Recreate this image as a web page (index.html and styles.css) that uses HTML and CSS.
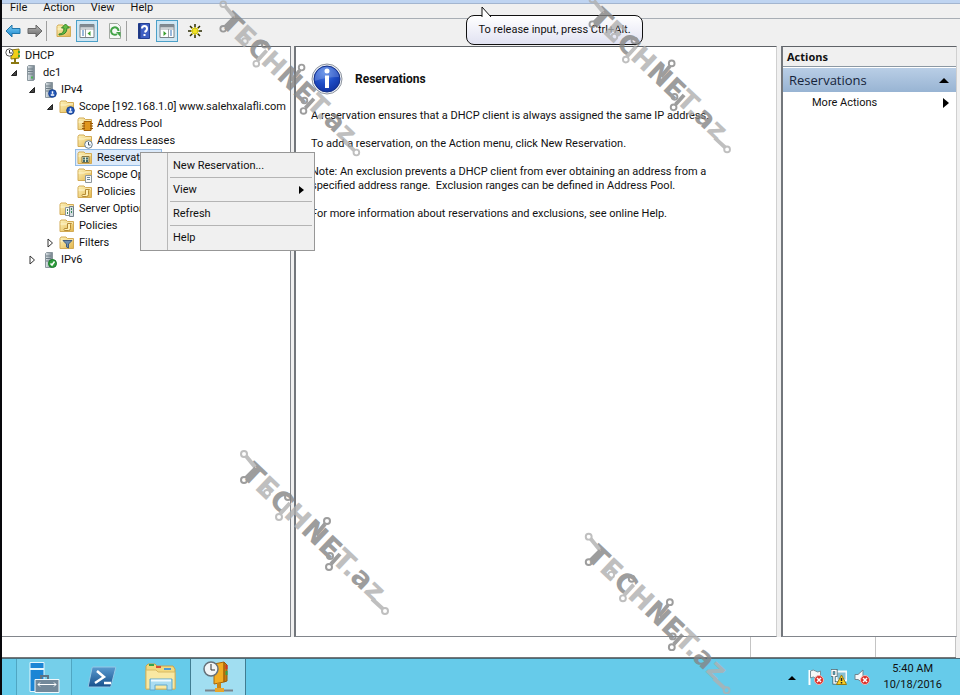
FILE: index.html
```html
<!DOCTYPE html>
<html lang="en">
<head>
<meta charset="utf-8">
<title>DHCP</title>
<link rel="stylesheet" href="styles.css">
</head>
<body>
<svg class="defs" width="0" height="0" aria-hidden="true">
  <defs>
    <linearGradient id="gFolder" x1="0" y1="0" x2="1" y2="1"><stop offset="0" stop-color="#fdf3bd"/><stop offset="1" stop-color="#e3b64c"/></linearGradient>
    <linearGradient id="gServer" x1="0" x2="1"><stop offset="0" stop-color="#dfe6ea"/><stop offset="1" stop-color="#72808a"/></linearGradient>
    <linearGradient id="gBlue" x1="0" y1="0" x2="0" y2="1"><stop offset="0" stop-color="#7fd0f5"/><stop offset="1" stop-color="#1583cc"/></linearGradient>
    <linearGradient id="gGrey" x1="0" y1="0" x2="0" y2="1"><stop offset="0" stop-color="#b5b5b5"/><stop offset="1" stop-color="#686868"/></linearGradient>
    <linearGradient id="gPs" x1="0" y1="0" x2="0" y2="1"><stop offset="0" stop-color="#5a9bd0"/><stop offset="1" stop-color="#17508c"/></linearGradient>
    <radialGradient id="gInfo" cx=".4" cy=".25" r=".9"><stop offset="0" stop-color="#4f83e6"/><stop offset=".5" stop-color="#1d4bc4"/><stop offset="1" stop-color="#0c2a94"/></radialGradient>
    <symbol id="folder" viewBox="0 0 16 16"><path d="M1 13.5V3.5L2 2h5l1.500 1.500H14.500V13.500z" fill="url(#gFolder)" stroke="#d3ab55"/><path d="M1.500 6h6l1-1h5.500" stroke="#fff6cf" fill="none"/></symbol>
    <symbol id="server" viewBox="0 0 16 16"><path d="M4.500 1.500l1-1h6v14l-1 1h-6z" fill="url(#gServer)" stroke="#8b979e"/><path d="M5 4h5M5 6.500h5M5 9h5" stroke="#6d7c85"/><path d="M8 12.500h2" stroke="#49b553" stroke-width="2"/></symbol>
    <symbol id="badge" viewBox="0 0 16 16"><circle cx="11.500" cy="11.500" r="3.800" fill="#2558b8" stroke="#16408f"/><path d="M11.500 9.200v2.500M9.800 13h3.400" stroke="#fff" stroke-width="1.500"/></symbol>
    <symbol id="scroll" viewBox="0 0 16 16"><path d="M8.500 5.500h4l-1 1v4q0 2-2 2h-4q-1-1 0-2h3z" fill="#fff0b5" stroke="#b58a35"/></symbol>
    <symbol id="open" viewBox="0 0 8 8"><path d="M6.500 1.500v5h-5z" fill="#444" stroke="#222"/></symbol>
    <symbol id="closed" viewBox="0 0 8 10"><path d="M2 1l4.500 4L2 9z" fill="#fff" stroke="#333"/></symbol>
    <symbol id="mark" viewBox="0 0 180 180">
      <text transform="translate(10 35) rotate(43.500)" class="mark-text"><tspan class="dark">T</tspan><tspan class="light">E</tspan><tspan class="dark">C</tspan><tspan class="light">H</tspan><tspan class="dark">NE</tspan><tspan class="light">T.</tspan><tspan class="dark">a</tspan><tspan class="light">z</tspan></text>
      <g fill="none" stroke-width="2">
        <g stroke="#b0b0b0"><path d="M16 16l9 11M50 74l10-11M153 169l-11-10" stroke-width="4"/><circle cx="14" cy="14" r="3"/><circle cx="37" cy="53" r="3"/><circle cx="49" cy="77" r="3"/><circle cx="155" cy="171" r="3"/></g>
        <g stroke="#858585"><path d="M16 38l10-10M95 84l-9 11M101 124l9-10" stroke-width="4"/><circle cx="14" cy="40" r="3"/><circle cx="58" cy="57" r="3"/><circle cx="97" cy="81" r="3"/><circle cx="100" cy="116" r="3"/><circle cx="99" cy="127" r="3"/></g>
      </g>
    </symbol>
  </defs>
</svg>

<div class="desktop">
  <div class="window">
    <div class="title-strip"></div>
    <nav class="menubar" aria-label="Menu bar">
      <button>File</button><button>Action</button><button>View</button><button>Help</button>
    </nav>
    <div class="toolbar" role="toolbar" aria-label="Tools">
      <button class="tool" aria-label="Back"><svg width="16" height="16" viewBox="0 0 16 16"><path d="M1 8l6-6v3.500h8v5H7V14z" fill="url(#gBlue)" stroke="#2277aa"/></svg></button>
      <button class="tool" aria-label="Forward"><svg width="16" height="16" viewBox="0 0 16 16"><path d="M15 8L9 2v3.500H1v5h8V14z" fill="url(#gGrey)" stroke="#686868"/></svg></button>
      <span class="divider"></span>
      <button class="tool" aria-label="Up one level"><svg width="16" height="16" viewBox="0 0 16 16"><use href="#folder"/><path d="M3 11q5 0 5-6H5.500L9.500 1l4 4H11q0 7-8 7z" fill="#65bd43" stroke="#35842a"/></svg></button>
      <button class="tool on" aria-label="Show console tree"><svg width="16" height="16" viewBox="0 0 16 16"><path d="M1 1.500h14v13H1z" fill="#fff" stroke="#7a8288"/><path d="M1 3h14" stroke="#818a91" stroke-width="3"/><path d="M1 6h14M6.500 6v8" stroke="#9ba2a7"/><path d="M3 8h2M3 10h2M3 12h2" stroke="#3472b8"/><path d="M11.500 8v5L8.500 10.500z" fill="#3a9f2e"/></svg></button>
      <button class="tool" aria-label="Refresh"><svg width="16" height="16" viewBox="0 0 16 16"><path d="M2.500.500h8l3 3v12h-11z" fill="#f7f9f7" stroke="#a3aaa3"/><path d="M11.500 8a3.700 3.700 0 1 0-1.500 3" fill="none" stroke="#43a447" stroke-width="2"/><path d="M9 9h4.500v5z" fill="#43a447"/></svg></button>
      <span class="divider"></span>
      <button class="tool" aria-label="Help"><svg width="16" height="16" viewBox="0 0 16 16"><path d="M2.500.500h11v15h-11z" fill="#3e5fc2" stroke="#233f94"/><path d="M3.500 1v14" stroke="#1e377f" stroke-width="2"/><path d="M6 5.500q0-2.500 2.500-2.500T11 5.500 8.500 9" fill="none" stroke="#fff" stroke-width="2"/><path d="M7.500 11h2v2h-2z" fill="#fff"/></svg></button>
      <button class="tool on" aria-label="Show action pane"><svg width="16" height="16" viewBox="0 0 16 16"><path d="M1 1.500h14v13H1z" fill="#fff" stroke="#7a8288"/><path d="M1 3h14" stroke="#818a91" stroke-width="3"/><path d="M1 6h14M9.500 6v8" stroke="#9ba2a7"/><path d="M11 8h2M11 10h2M11 12h2" stroke="#3472b8"/><path d="M4.500 8v5L7.500 10.500z" fill="#3a9f2e"/></svg></button>
      <button class="tool" aria-label="New reservation"><svg width="16" height="16" viewBox="0 0 16 16"><path d="M8 1v14M1 8h14M3 3l10 10M13 3L3 13" stroke="#2b2b00" stroke-width="1.500"/><path d="M8 4v8M4 8h8M5 5l6 6M11 5l-6 6" stroke="#f4e51e" stroke-width="1.500"/></svg></button>
    </div>

    <main class="panes">
      <section class="pane tree" aria-label="Console tree">
        <ul>
          <li><div class="row"><svg class="ico" viewBox="0 0 16 16"><path d="M6 2l8-1v9l-8 1z" fill="#f0cf17" stroke="#8b7811"/><path d="M10 10v4M6 15h8" stroke="#8b7811" stroke-width="2"/><path d="M14 3v2M14 7v2" stroke="#3aa13a" stroke-width="2"/><circle cx="4.500" cy="4.500" r="3.700" fill="#fff" stroke="#555"/><path d="M4.500 2v3H7" fill="none" stroke="#333"/></svg>DHCP</div>
          <ul class="first">
            <li><div class="row"><span class="exp"><svg width="8" height="8"><use href="#open"/></svg></span><svg class="ico"><use href="#server"/></svg>dc1</div>
            <ul>
              <li><div class="row"><span class="exp"><svg width="8" height="8"><use href="#open"/></svg></span><svg class="ico"><use href="#server"/><use href="#badge"/></svg>IPv4</div>
              <ul>
                <li><div class="row"><span class="exp"><svg width="8" height="8"><use href="#open"/></svg></span><svg class="ico"><use href="#folder"/><use href="#badge"/></svg>Scope [192.168.1.0] www.salehxalafli.com</div>
                <ul>
                  <li><div class="row"><span class="exp"></span><svg class="ico"><use href="#folder"/><path d="M7 5.500h7v9H7z" fill="#df951d" stroke="#a4620d"/><path d="M5 7.500h3M5 10h3M5 12.500h3M13 7.500h3M13 10h3M13 12.500h3" stroke="#9b5b0a"/></svg>Address Pool</div></li>
                  <li><div class="row"><span class="exp"></span><svg class="ico"><use href="#folder"/><circle cx="11.500" cy="11.500" r="3.800" fill="#f5faff" stroke="#687d8d"/><path d="M11.500 9v3h2" fill="none" stroke="#456"/></svg>Address Leases</div></li>
                  <li><div class="row"><span class="exp"></span><span class="selected"><svg class="ico"><use href="#folder"/><path d="M5 6.500h7v6H5z" fill="#e9edcf" stroke="#887740"/><path d="M6 8.500h2M9 8.500h2M6 11h2M9 11h2" stroke="#426b6a" stroke-width="2"/></svg>Reservations</span></div></li>
                  <li><div class="row"><span class="exp"></span><svg class="ico"><use href="#folder"/><path d="M8.500 8.500h6v7h-6z" fill="#f8f8f8" stroke="#8c969c"/><path d="M10 10.500h3M10 12.500h3" stroke="#68879b"/></svg>Scope Options</div></li>
                  <li><div class="row"><span class="exp"></span><svg class="ico"><use href="#folder"/><use href="#scroll"/></svg>Policies</div></li>
                </ul></li>
                <li><div class="row"><span class="exp"></span><svg class="ico"><use href="#folder"/><path d="M6.500 6.500h4v8h-4z" fill="#f8f8f8" stroke="#8c969c"/><path d="M10.500 5.500h4v10h-4z" fill="#d5dde1" stroke="#72808a"/><path d="M8 9h1M8 12h1M12 8h1M12 11h1" stroke="#368a5a" stroke-width="2"/></svg>Server Options</div></li>
                <li><div class="row"><span class="exp"></span><svg class="ico"><use href="#folder"/><use href="#scroll"/></svg>Policies</div></li>
                <li><div class="row"><span class="exp"><svg width="8" height="10"><use href="#closed"/></svg></span><svg class="ico"><use href="#folder"/><path d="M4 5.500h9L9.500 9v4L7.500 12V9z" fill="#6e8fb0" stroke="#425c7b"/></svg>Filters</div></li>
              </ul></li>
              <li><div class="row"><span class="exp"><svg width="8" height="10"><use href="#closed"/></svg></span><svg class="ico"><use href="#server"/><circle cx="11.500" cy="11.500" r="4" fill="#2f9e3c" stroke="#18792a"/><path d="M9.500 11.500l1.500 1.500 2.500-3.500" fill="none" stroke="#fff" stroke-width="1.500"/></svg>IPv6</div></li>
            </ul></li>
          </ul></li>
        </ul>
      </section>

      <section class="pane details">
        <header class="details-head">
          <svg width="32" height="32" viewBox="0 0 32 32" aria-hidden="true"><circle cx="16" cy="16" r="15" fill="#edf0f5" stroke="#8d949e"/><circle cx="16" cy="16" r="13" fill="url(#gInfo)" stroke="#143087"/><path d="M4 18a12 12 0 0 1 24-4q-14 0-24 4" fill="#fff" opacity=".18"/><circle cx="16" cy="8" r="2.500" fill="#fff"/><path d="M14 12.500h4V25h-4z" fill="#fff"/></svg>
          <h1>Reservations</h1>
        </header>
        <p>A reservation ensures that a DHCP client is always assigned the same IP address.</p>
        <p>To add a reservation, on the Action menu, click New Reservation.</p>
        <p>Note: An exclusion prevents a DHCP client from ever obtaining an address from a<br>specified address range.&nbsp; Exclusion ranges can be defined in Address Pool.</p>
        <p>For more information about reservations and exclusions, see online Help.</p>
      </section>

      <aside class="pane actions">
        <h2>Actions</h2>
        <button class="group">Reservations<svg width="10" height="6" aria-hidden="true"><path d="M0 6l5-5 5 5z"/></svg></button>
        <button class="more">More Actions<svg width="6" height="10" aria-hidden="true"><path d="M0 0l6 5-6 5z"/></svg></button>
      </aside>
    </main>

    <footer class="status"><span></span><span class="cell mid"></span><span class="cell end"></span></footer>

    <ul class="context" role="menu">
      <li><button role="menuitem">New Reservation...</button></li>
      <li><button role="menuitem">View<svg width="5" height="8" aria-hidden="true"><path d="M0 0l5 4-5 4z"/></svg></button></li>
      <li><button role="menuitem">Refresh</button></li>
      <li><button role="menuitem">Help</button></li>
    </ul>
    <div class="callout" role="tooltip"><svg width="12" height="11" viewBox="0 0 12 11" aria-hidden="true"><path d="M1 11V1l9 10" fill="#fff" stroke="#111"/></svg>To release input, press Ctrl+Alt.</div>
  </div>

  <div class="taskbar">
    <div class="apps">
      <button class="app running" aria-label="Server Manager"><svg width="32" height="32" viewBox="0 0 32 32"><path d="M2 1.500h14v29H2z" fill="#1b85d5" stroke="#e5f6fd"/><path d="M2 8h14" stroke="#e5f6fd" stroke-width="2"/><path d="M13 18V15h7v3" fill="none" stroke="#5f7484" stroke-width="2"/><path d="M7 18.500h24v13H7z" fill="#72889a" stroke="#f1f8fb"/><path d="M10 23.500h18M12 21.500l-2 2 2 2M26 21.500l2 2-2 2" fill="none" stroke="#fff"/></svg></button>
      <button class="app" aria-label="PowerShell"><svg width="32" height="32" viewBox="0 0 32 32"><path d="M7 6h22q1 0 .7 1L25 25q-.3 1-1.500 1H3q-1 0-.7-1L6 7q.2-1 1-1z" fill="url(#gPs)" stroke="#96c8e6"/><path d="M11 10l7 6-9 6M18 22h7" fill="none" stroke="#fff" stroke-width="2.500"/></svg></button>
      <button class="app" aria-label="File Explorer"><svg width="32" height="32" viewBox="0 0 32 32"><path d="M2 28V5l2-2h7l2 2h16l2 3v20z" fill="#f2d980" stroke="#c9a34c"/><path d="M5 4h5" stroke="#34a34a" stroke-width="2"/><path d="M12 6h5" stroke="#d94d35" stroke-width="2"/><path d="M20 8h7" stroke="#4d99d2" stroke-width="2"/><path d="M2 28V9h10l2 2h17v17z" fill="#f9e8a2" stroke="#d8b962"/><path d="M6 29V18h22v11h-5v-5H11v5z" fill="#a9dcf2" stroke="#5fa8cf"/><path d="M7 19.500h20" stroke="#eefaff" stroke-width="2"/></svg></button>
      <button class="app active" aria-label="DHCP"><svg width="32" height="32" viewBox="0 0 32 32"><path d="M12 3l10-2v20l-10 2z" fill="#f2ad24" stroke="#a8680b"/><path d="M22 1l3 3v16l-3 1z" fill="#c47b10" stroke="#9a5b08"/><path d="M24.500 4v4" stroke="#cf3427" stroke-width="2"/><path d="M24.500 10v4" stroke="#35a24b" stroke-width="2"/><path d="M17 22v7" stroke="#c98516" stroke-width="4"/><path d="M3 29.500h28" stroke="#7a848b" stroke-width="2"/><path d="M13 29h9" stroke="#e8a52b" stroke-width="4"/><circle cx="9" cy="8" r="7" fill="#f2f5f7" stroke="#65717a" stroke-width="1.500"/><path d="M9 3v6h4" fill="none" stroke="#333"/></svg></button>
    </div>
    <div class="tray">
      <svg width="8" height="5" aria-hidden="true"><path d="M0 5l4-4 4 4z"/></svg>
      <svg width="16" height="16" viewBox="0 0 16 16" aria-label="Action Center"><path d="M1.500 1v15" stroke="#fff" stroke-width="2"/><path d="M2.500 2q3-2 5 0t5 0v7q-3 2-5 0t-5 0z" fill="#f5f7f8" stroke="#78909a"/><circle cx="11" cy="11" r="4.500" fill="#db2f2a" stroke="#f0b7b2"/><path d="M9 9l4 4M13 9l-4 4" stroke="#fff" stroke-width="1.500"/></svg>
      <svg width="16" height="16" viewBox="0 0 16 16" aria-label="Network"><path d="M5.500 2.500h10v9h-10z" fill="#87bfd2" stroke="#f7fbfc" stroke-width="2"/><path d="M1 1.500h4v5H1zM3 7v7h4" fill="none" stroke="#3b5863" stroke-width="3"/><path d="M1 1.500h4v5H1zM3 7v7h4" fill="none" stroke="#fff" stroke-width="1.500"/><path d="M10.500 6l5 9.500h-10z" fill="#f6cf26" stroke="#9c780a"/><path d="M10.500 9v3M10.500 13v1.500" stroke="#222" stroke-width="1.500"/></svg>
      <svg width="16" height="16" viewBox="0 0 16 16" aria-label="Volume"><path d="M1 5.500h3l5-4.500v13L4 10.500H1z" fill="#f5f7f8" stroke="#71858f"/><circle cx="11" cy="11" r="4.500" fill="#db2f2a" stroke="#f0b7b2"/><path d="M9 9l4 4M13 9l-4 4" stroke="#fff" stroke-width="1.500"/></svg>
      <div class="clock"><time>5:40 AM</time><time>10/18/2016</time></div>
    </div>
  </div>

  <svg class="mark m1" aria-hidden="true"><use href="#mark"/></svg>
  <svg class="mark m2" aria-hidden="true"><use href="#mark"/></svg>
  <svg class="mark m3" aria-hidden="true"><use href="#mark"/></svg>
  <svg class="mark m4" aria-hidden="true"><use href="#mark"/></svg>
</div>
</body>
</html>
```
FILE: styles.css
```css
* { box-sizing: border-box; }
body {
  margin: 0;
  background: #f0f0f0;
  color: #111;
  font: 11px/14px Roboto, "Open Sans", sans-serif;
}
button {
  margin: 0; padding: 0; border: 0;
  background: none; color: inherit; font: inherit; text-align: left;
}
ul { list-style: none; margin: 0; padding: 0; }
svg { flex: none; display: block; }
.defs { position: absolute; }

.desktop {
  position: relative;
  display: flex; flex-direction: column;
  min-height: 100vh;
  overflow: hidden;
  border-left: 2px solid #08080c;
}
.window { position: relative; flex: 1; display: flex; flex-direction: column; }
.title-strip { height: 4px; background: #bfd4f1; border-bottom: 1px solid #a3b5cf; }
.menubar {
  display: flex; gap: 16px;
  height: 15px; padding-left: 8px;
  line-height: 8px; align-items: flex-start;
  border-bottom: 1px solid #a8aeb5;
}
.toolbar { display: flex; align-items: center; height: 27px; padding-bottom: 4px; }
.tool { display: flex; align-items: center; justify-content: center; width: 22px; height: 22px; border: 1px solid transparent; }
.tool.on { margin: 0 6px 0 1px; border-color: #4ba0c8; background: #cfe6f3; }
.divider { width: 1px; height: 20px; margin-right: 6px; background: #a0a0a0; }

.panes { flex: 1; display: grid; grid-template-columns: 289px 1fr 176px; gap: 3px; padding-right: 3px; }
.pane { background: #fff; border: 1px solid #82868c; border-top-color: #5f6368; min-width: 0; }
.details, .actions { border-left: 2px solid #73777c; border-right-color: #d0d0d0; }
.tree { padding: 0 3px; border-left: 0; }
.tree ul ul { margin-left: 18px; }
.tree ul ul.first { margin-left: 4px; }
.row, .selected { display: flex; align-items: center; height: 17px; white-space: nowrap; }
.exp { width: 14px; flex: none; }
.exp svg { margin-left: 1px; }
.ico { width: 16px; height: 16px; margin-right: 4px; }
.selected { margin: 0 -2px; padding: 0 1px; border: 1px solid #94bce6; background: #dceafa; }

.details { margin-right: 1px; padding: 16px 15px; }
.details-head { display: flex; align-items: center; gap: 12px; margin-bottom: 14px; }
.details h1 { margin: 0; font-size: 12px; }
.details p { margin: 0 0 14px; }

.actions h2 { margin: 0; padding: 3px 4px 2px; font: bold 11px/14px "Open Sans", sans-serif; background: #f0f0f0; border-bottom: 1px solid #8c98a3; }
.actions button { display: flex; width: 100%; align-items: center; justify-content: space-between; padding-right: 7px; }
.actions .group { height: 24px; margin-top: 1px; padding-left: 6px; font: 13px/18px "Open Sans", sans-serif; color: #16243a; background: linear-gradient(#b9cee6, #98b4d3); }
.actions .more { height: 22px; padding-left: 29px; }

.status { display: grid; grid-template-columns: 1fr 125px 81px; height: 21px; margin-right: 4px; background: #fff; border-bottom: 1px solid #777; }
.cell { border-left: 1px solid #c4c4c4; }
.cell.end { border-right: 1px solid #c4c4c4; }

.context {
  position: absolute; left: 138px; top: 152px;
  width: 175px; padding: 1px 2px;
  background: linear-gradient(90deg, transparent 26px, #b8b8b8 26px, #b8b8b8 27px, transparent 27px) #f0f0f0;
  border: 1px solid #979797;
}
.context li + li { margin-left: 27px; border-top: 1px solid #b4b4b4; }
.context li:first-child { margin-left: 27px; }
.context button { display: flex; align-items: center; justify-content: space-between; width: 100%; height: 23px; padding: 0 8px 0 3px; }
.callout {
  position: absolute; left: 464px; top: 15px;
  width: 177px; height: 30px;
  border: 1px solid #111; border-radius: 8px;
  background: linear-gradient(#fff, #e1e2f2);
  line-height: 28px; text-align: center;
}
.callout svg { position: absolute; left: 14px; top: -10px; }

.taskbar { display: flex; justify-content: space-between; height: 37px; background: #66cbea; border-top: 1px solid #496b78; }
.apps { display: flex; gap: 2px; padding-left: 14px; }
.app { display: flex; justify-content: center; align-items: center; width: 56px; border: 1px solid transparent; border-width: 0 1px; }
.app.running { background: #75cfea; border-color: #50a6c2; }
.app.active { background: #a1def1; border-color: #417d92; }
.tray { display: flex; align-items: center; gap: 7px; padding-right: 18px; }
.tray > svg:first-child { margin-right: 5px; }
.clock { display: flex; flex-direction: column; align-items: center; margin-left: 6px; line-height: 16px; }

.mark { position: absolute; width: 180px; height: 180px; opacity: .8; pointer-events: none; }
.mark-text { font: bold 28px "DejaVu Sans", sans-serif; }
.mark-text .dark { fill: #858585; }
.mark-text .light { fill: #b0b0b0; }
.m1 { left: 208px; top: -9px; width: 170px; height: 170px; }
.m2 { left: 577px; top: -14px; width: 172px; height: 172px; }
.m3 { left: 228px; top: 440px; }
.m4 { left: 573px; top: 523px; width: 176px; height: 176px; }
```
